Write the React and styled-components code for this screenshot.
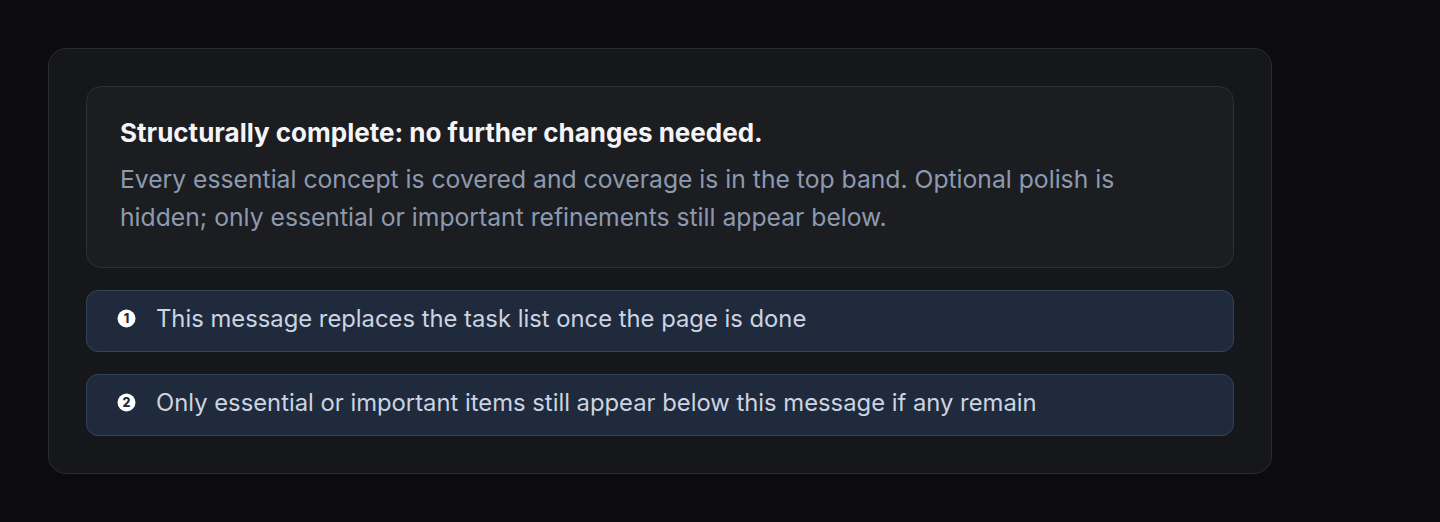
import React from "react";
import styled, { createGlobalStyle } from "styled-components";

const GlobalStyle = createGlobalStyle`
  html, body {
    margin: 0;
    padding: 0;
    background: #0c0c10;
    font-family: Inter, "Noto Sans", "Liberation Sans", sans-serif;
    -webkit-font-smoothing: antialiased;
  }
`;

const Page = styled.div`
  padding: 48px 0 0 48px;
  min-height: 474px;
`;

const Panel = styled.section`
  box-sizing: border-box;
  width: 1224px;
  padding: 37px;
  background: #16171b;
  border: 1px solid #2b2c32;
  border-radius: 18px;
  display: flex;
  flex-direction: column;
  gap: 22px;
`;

const Summary = styled.div`
  background: #1c1d21;
  border: 1px solid #2e2f35;
  border-radius: 15px;
  padding: 31px 33px 31px;
`;

const Title = styled.h2`
  margin: 0 0 12px;
  font-size: 26px;
  line-height: 30px;
  font-weight: 700;
  color: #f4f4f6;
`;

const Body = styled.p`
  margin: 0;
  max-width: 1010px;
  font-size: 24.7px;
  line-height: 38px;
  color: #8c9ab0;
`;

const Note = styled.div`
  display: flex;
  align-items: center;
  gap: 20px;
  height: 62px;
  box-sizing: border-box;
  padding: 0 30px 6px;
  background: #1f2a3c;
  border: 1px solid #33435a;
  border-radius: 12px;
  font-size: 23.8px;
  color: #cbd4e0;
`;

const Badge = ({ n }) => (
  <svg width="19" height="19" viewBox="0 0 19 19">
    <circle cx="9.5" cy="9.5" r="9" fill="#ffffff" />
    <text
      x="9.5"
      y="14"
      textAnchor="middle"
      fontSize="12.5"
      fontWeight="800"
      fontFamily="Inter, sans-serif"
      fill="#1f2a3c"
    >
      {n}
    </text>
  </svg>
);

const notes = [
  "This message replaces the task list once the page is done",
  "Only essential or important items still appear below this message if any remain",
];

export default function App() {
  return (
    <>
      <GlobalStyle />
      <Page>
        <Panel>
          <Summary>
            <Title>Structurally complete: no further changes needed.</Title>
            <Body>
              Every essential concept is covered and coverage is in the top band. Optional polish is
              hidden; only essential or important refinements still appear below.
            </Body>
          </Summary>
          {notes.map((t, i) => (
            <Note key={i}>
              <Badge n={i + 1} />
              {t}
            </Note>
          ))}
        </Panel>
      </Page>
    </>
  );
}
